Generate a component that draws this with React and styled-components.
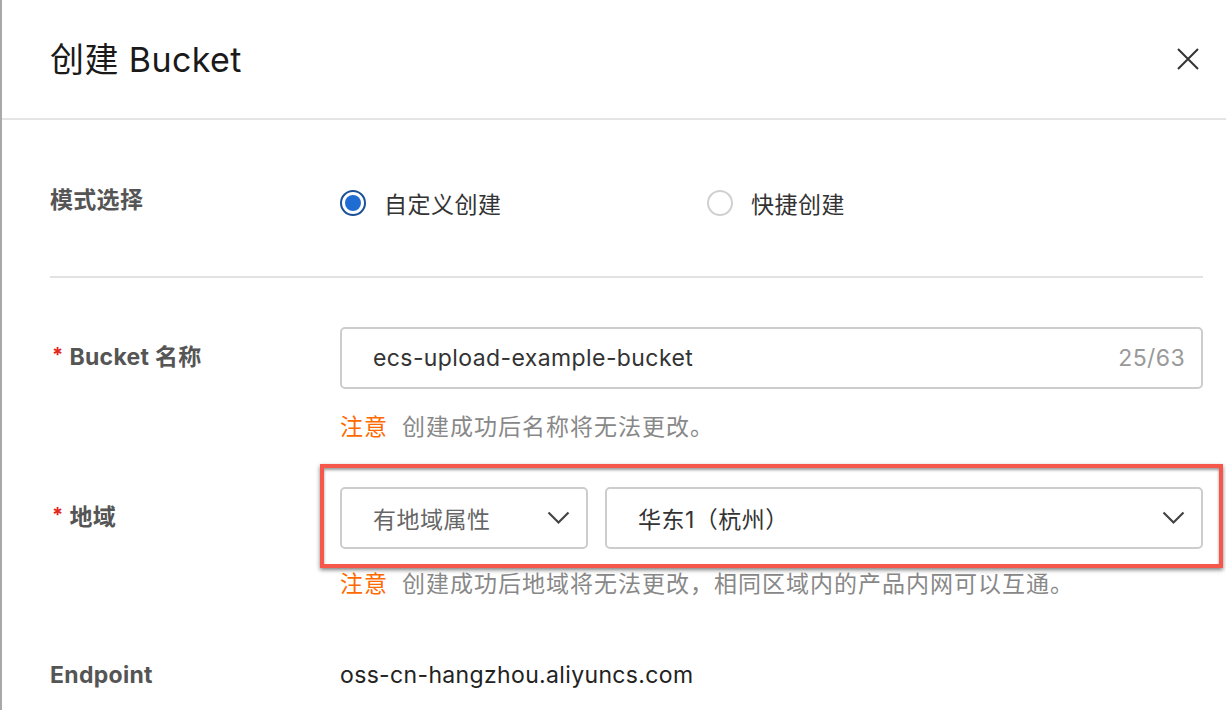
import styled, { createGlobalStyle } from 'styled-components';

const GlobalStyle = createGlobalStyle`
  html, body {
    margin: 0;
    padding: 0;
    background: #fff;
  }
  body {
    font-family: "Inter", "Noto Sans CJK SC", sans-serif;
  }
`;

const Panel = styled.div`
  width: 1226px;
  height: 710px;
  box-sizing: border-box;
  border-left: 2px solid #a9a9a9;
  background: #fff;
  overflow: hidden;
`;

const Header = styled.div`
  height: 120px;
  box-sizing: border-box;
  border-bottom: 2px solid #e4e4e4;
  display: flex;
  align-items: center;
  justify-content: space-between;
  padding: 0 26px 0 48px;
`;

const Title = styled.h1`
  margin: 0;
  font-size: 34px;
  font-weight: 400;
  color: #1a1a1a;
  letter-spacing: 0.4px;
  transform: translateY(-2px);
`;

const CloseButton = styled.button`
  border: none;
  background: none;
  padding: 0;
  width: 24px;
  height: 24px;
  display: flex;
  align-items: center;
  justify-content: center;
  cursor: pointer;
`;

const Body = styled.div`
  padding: 0 23px 0 48px;
`;

const FormRow = styled.div`
  display: grid;
  grid-template-columns: 290px 1fr;
  margin-top: ${p => p.$top}px;
`;

const Label = styled.div`
  height: 62px;
  display: flex;
  align-items: center;
  font-size: 23px;
  font-weight: 700;
  color: #555;
  letter-spacing: 0.3px;
  transform: translateY(${p => (p.$shift ?? -3)}px);
`;

const Required = styled.span`
  color: #e0261d;
  font-size: 20px;
  margin-right: 6px;
  margin-left: 2px;
`;

const Field = styled.div`
  display: flex;
  flex-direction: column;
`;

const RadioGroup = styled.div`
  height: 62px;
  display: flex;
  align-items: center;
`;

const RadioOption = styled.label`
  display: flex;
  align-items: center;
  gap: 18px;
  width: 367px;
  font-size: 23px;
  letter-spacing: 0.5px;
  color: #333;
  cursor: pointer;
`;

const RadioCircle = styled.span`
  width: 26px;
  height: 26px;
  box-sizing: border-box;
  border-radius: 50%;
  border: 2px solid ${p => (p.$checked ? '#1b5199' : '#d0d0d0')};
  display: flex;
  align-items: center;
  justify-content: center;

  &::after {
    content: '';
    width: 16px;
    height: 16px;
    border-radius: 50%;
    background: ${p => (p.$checked ? '#1f6dd2' : 'transparent')};
  }
`;

const Divider = styled.div`
  height: 2px;
  background: #e2e2e2;
  margin-top: 42px;
`;

const InputBox = styled.div`
  height: 62px;
  box-sizing: border-box;
  border: 2px solid #cdcdcd;
  border-radius: 5px;
  display: flex;
  align-items: center;
  justify-content: space-between;
  padding: 0 16px 0 31px;
  font-size: 23px;
  letter-spacing: 0.4px;
  color: #333;
`;

const Counter = styled.span`
  color: #999;
`;

const Hint = styled.div`
  margin-top: ${p => p.$top}px;
  line-height: 30px;
  font-size: 23px;
  letter-spacing: 1px;
  color: #888;
`;

const HintTag = styled.span`
  color: #ff6a00;
  margin-right: 14px;
`;

const SelectArea = styled.div`
  position: relative;
  display: flex;
  gap: 17px;
`;

const Select = styled.div`
  height: 62px;
  box-sizing: border-box;
  border: 2px solid #cdcdcd;
  border-radius: 5px;
  display: flex;
  align-items: center;
  justify-content: space-between;
  padding: 0 16px 0 31px;
  font-size: 23px;
  letter-spacing: 0.5px;
  color: ${p => (p.$muted ? '#666' : '#333')};
  width: ${p => p.$width}px;
  flex: ${p => (p.$grow ? 1 : 'none')};
`;

const Highlight = styled.div`
  position: absolute;
  top: -23px;
  left: -20px;
  right: -20px;
  bottom: -19px;
  border: 4px solid #f5584b;
  box-shadow: 0 2px 4px rgba(0, 0, 0, 0.5), inset 0 2px 3px rgba(0, 0, 0, 0.4);
  pointer-events: none;
`;

const Value = styled.div`
  height: 62px;
  display: flex;
  align-items: center;
  font-size: 23px;
  letter-spacing: 0.35px;
  color: #222;
`;

const Chevron = () => (
  <svg width="23" height="14" viewBox="0 0 23 14" fill="none">
    <path d="M1.5 1.5 L11.5 11.5 L21.5 1.5" stroke="#444" strokeWidth="2.2" />
  </svg>
);

const CloseIcon = () => (
  <svg width="22" height="22" viewBox="0 0 22 22" fill="none">
    <path d="M1 1 L21 21 M21 1 L1 21" stroke="#333" strokeWidth="2" />
  </svg>
);

const App = () => {
  return (
    <Panel>
      <GlobalStyle />
      <Header>
        <Title>创建 Bucket</Title>
        <CloseButton aria-label="关闭">
          <CloseIcon />
        </CloseButton>
      </Header>

      <Body>
        <FormRow $top={52}>
          <Label $shift={-5}>模式选择</Label>
          <RadioGroup>
            <RadioOption>
              <RadioCircle $checked />
              自定义创建
            </RadioOption>
            <RadioOption>
              <RadioCircle />
              快捷创建
            </RadioOption>
          </RadioGroup>
        </FormRow>

        <Divider />

        <FormRow $top={49}>
          <Label>
            <Required>*</Required>Bucket 名称
          </Label>
          <Field>
            <InputBox>
              <span>ecs-upload-example-bucket</span>
              <Counter>25/63</Counter>
            </InputBox>
            <Hint $top={23}>
              <HintTag>注意</HintTag>创建成功后名称将无法更改。
            </Hint>
          </Field>
        </FormRow>

        <FormRow $top={45}>
          <Label>
            <Required>*</Required>地域
          </Label>
          <Field>
            <SelectArea>
              <Select $muted $width={248}>
                有地域属性
                <Chevron />
              </Select>
              <Select $grow>
                华东1（杭州）
                <Chevron />
              </Select>
              <Highlight />
            </SelectArea>
            <Hint $top={20}>
              <HintTag>注意</HintTag>创建成功后地域将无法更改，相同区域内的产品内网可以互通。
            </Hint>
          </Field>
        </FormRow>

        <FormRow $top={45}>
          <Label $shift={0}>Endpoint</Label>
          <Value>oss-cn-hangzhou.aliyuncs.com</Value>
        </FormRow>
      </Body>
    </Panel>
  );
};

export default App;
